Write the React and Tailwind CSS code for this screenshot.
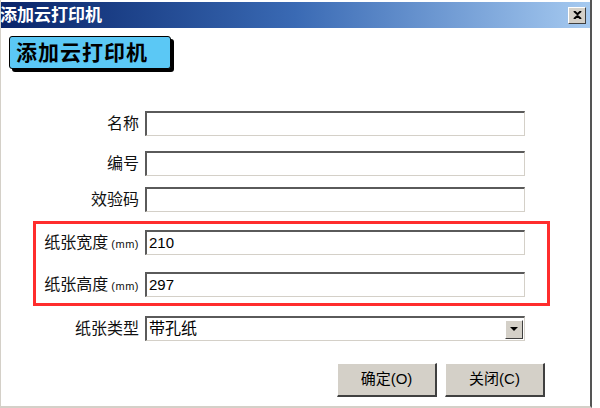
import React from 'react';

const font = { fontFamily: '"Liberation Sans", "Noto Sans CJK SC", sans-serif' };

const sunken = 'h-[25px] w-[380px] bg-white border-t-2 border-l-2 border-b border-r border-t-[#5a5a5a] border-l-[#5a5a5a] border-b-[#d4d0c8] border-r-[#d4d0c8] flex items-center px-[2px] text-[15px] text-black';

const Row = ({ label, unit, value, className = '' }) => (
  <div className={`flex items-center ${className}`}>
    <div className="w-[144px] pr-[6px] flex justify-end items-baseline text-[16px] text-[#111]">
      <span>{label}</span>
      {unit && <span className="text-[11px] ml-[3px] tracking-[0.5px]">(mm)</span>}
    </div>
    <div className={sunken}>{value}</div>
  </div>
);

const RaisedButton = ({ children }) => (
  <button className="w-[100px] h-[34px] bg-[#d4d0c8] border-t border-l border-t-white border-l-white border-b-2 border-r-2 border-b-[#404040] border-r-[#404040] text-[15px] text-black flex items-center justify-center">
    {children}
  </button>
);

export default function App() {
  return (
    <div className="w-[600px] h-[408px] bg-white overflow-hidden flex" style={font}>
      <div className="w-[592px] h-full flex flex-col border-r-2 border-r-[#555] border-l border-l-[#d4d0c8] border-b-2 border-b-[#d4d0c8]">
        {/* Title bar */}
        <div className="mt-[2px] h-[26px] bg-gradient-to-r from-[#0a246a] via-[#3a6ab4] to-[#a6caf0] flex items-center justify-between">
          <span className="text-white font-bold text-[17px] leading-none -ml-px">添加云打印机</span>
          <div className="mr-[4px] w-[18px] h-[17px] bg-[#d4d0c8] border-t border-l border-t-white border-l-white border-b border-r border-b-[#404040] border-r-[#404040] flex items-center justify-center">
            <svg width="9" height="8" viewBox="0 0 9 8">
              <path d="M1 0 L4.5 3.2 L8 0 M1 8 L4.5 4.8 L8 8" stroke="#000" strokeWidth="2" fill="none" />
            </svg>
          </div>
        </div>

        {/* Header badge */}
        <div className="mt-[8px] ml-[8px] w-[162px] h-[33px] bg-[#5bc8f5] border border-black rounded-[3px] shadow-[3px_3px_0_#000] flex items-center pl-[6px]">
          <span className="text-[21px] font-bold text-black leading-none tracking-[1px]">添加云打印机</span>
        </div>

        {/* Form */}
        <Row label="名称" className="mt-[42px]" />
        <Row label="编号" className="mt-[15px]" />
        <Row label="效验码" className="mt-[11px]" />

        <div className="mt-[9px] ml-[32px] w-[517px] h-[85px] border-[3px] border-[#ff2d2d] flex flex-col">
          <div className="-ml-[35px]">
            <Row label="纸张宽度" unit value="210" className="mt-[6px]" />
            <Row label="纸张高度" unit value="297" className="mt-[17px]" />
          </div>
        </div>

        <div className="flex items-center mt-[10px]">
          <div className="w-[144px] pr-[6px] text-right text-[16px] text-[#111]">纸张类型</div>
          <div className={`${sunken} justify-between pr-[1px]`}>
            <span className="text-[16px]">带孔纸</span>
            <div className="w-[18px] h-[19px] bg-[#d4d0c8] border-t border-l border-t-white border-l-white border-b border-r border-b-[#404040] border-r-[#404040] flex items-center justify-center">
              <svg width="8" height="4" viewBox="0 0 8 4">
                <path d="M0 0 H8 L4 4 Z" fill="#000" />
              </svg>
            </div>
          </div>
        </div>

        <div className="flex justify-end gap-[8px] mt-[22px] mr-[45px]">
          <RaisedButton>确定(O)</RaisedButton>
          <RaisedButton>关闭(C)</RaisedButton>
        </div>
      </div>
    </div>
  );
}
